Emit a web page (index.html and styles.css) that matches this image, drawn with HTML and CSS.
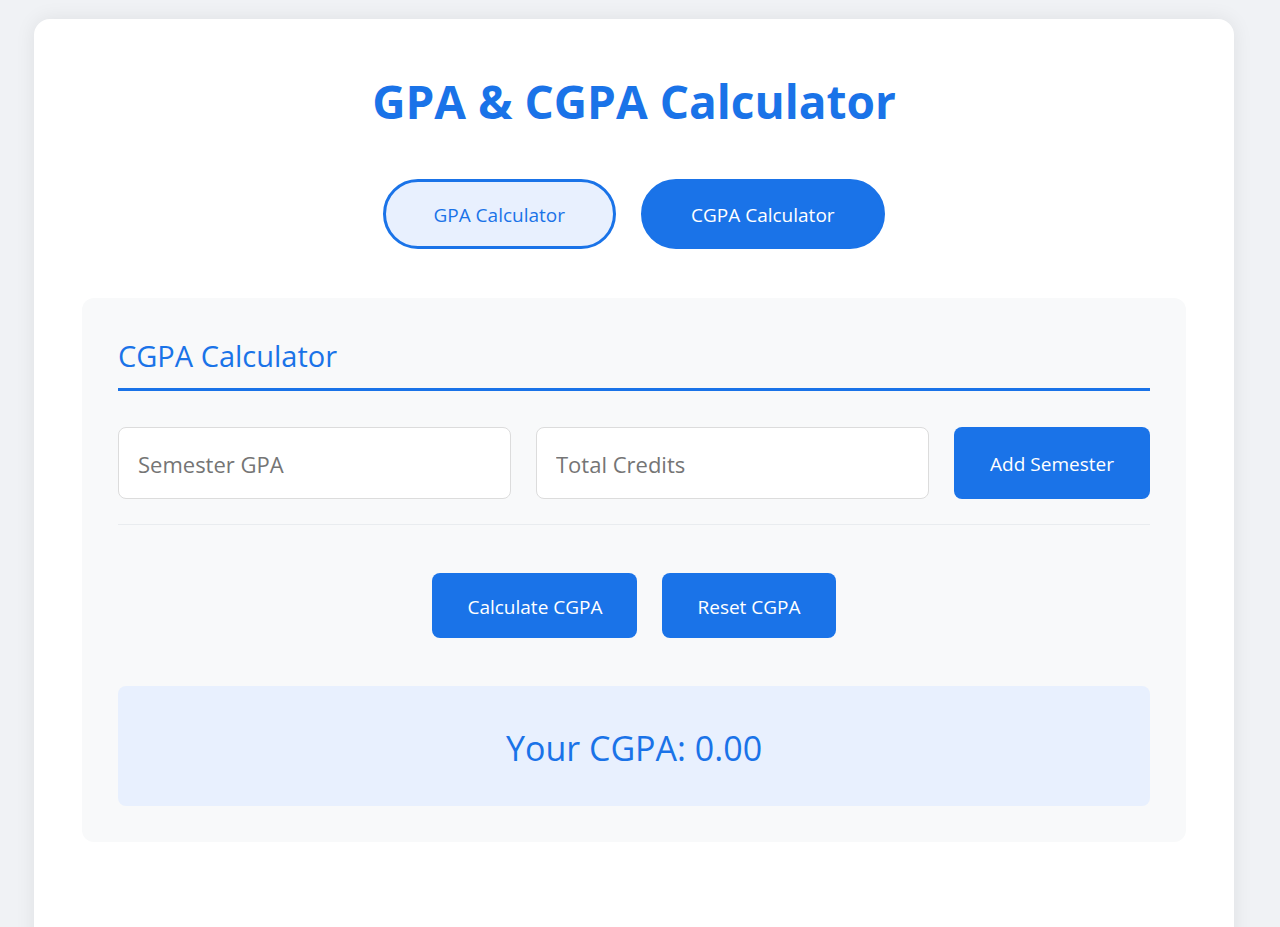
FILE: index.html
```html
<!DOCTYPE html>
<html lang="en">
<head>
<meta charset="utf-8">
<title>GPA &amp; CGPA Calculator</title>
<link rel="stylesheet" href="styles.css">
</head>
<body>
<div class="container">
  <h1 class="title">GPA &amp; CGPA Calculator</h1>
  <div class="tabs">
    <button class="tab tab-outline">GPA Calculator</button>
    <button class="tab tab-filled">CGPA Calculator</button>
  </div>
  <section class="panel">
    <h2 class="panel-title">CGPA Calculator</h2>
    <div class="input-row">
      <input class="field" type="text" placeholder="Semester GPA">
      <input class="field" type="text" placeholder="Total Credits">
      <button class="btn btn-add">Add Semester</button>
    </div>
    <div class="semester-list"></div>
    <div class="actions">
      <button class="btn btn-action">Calculate CGPA</button>
      <button class="btn btn-action">Reset CGPA</button>
    </div>
    <div class="result">Your CGPA: 0.00</div>
  </section>
</div>
</body>
</html>
```
FILE: styles.css
```css
* { box-sizing: border-box; }
html, body { margin: 0; }
body {
  background: #f0f2f5;
  font-family: "Open Sans", "Noto Sans", sans-serif;
  padding-top: 19px;
}
.container {
  width: 1200px;
  margin-left: 34px;
  min-height: 940px;
  background: #fff;
  border-radius: 16px;
  box-shadow: 0 0 20px rgba(0, 0, 0, 0.08);
  padding: 53px 48px 48px;
}
.title {
  margin: 0;
  text-align: center;
  color: #1a73e8;
  font-size: 46px;
  font-weight: 700;
  line-height: 58px;
}
.tabs {
  display: flex;
  justify-content: center;
  gap: 25px;
  margin-top: 49px;
}
.tab {
  height: 70px;
  padding: 2px 47.5px 0;
  border-radius: 35px;
  border: 3px solid #1a73e8;
  font-family: inherit;
  font-size: 19px;
  cursor: pointer;
}
.tab-outline { background: #e8f0fe; color: #1a73e8; }
.tab-filled { background: #1a73e8; color: #fff; }
.panel {
  margin-top: 49px;
  background: #f8f9fa;
  border-radius: 12px;
  padding: 36px;
}
.panel-title {
  margin: 0;
  color: #1a73e8;
  font-size: 29px;
  font-weight: 400;
  line-height: 44px;
  padding-bottom: 10px;
  border-bottom: 3px solid #1a73e8;
}
.input-row {
  display: flex;
  gap: 25px;
  margin-top: 36px;
  height: 72px;
}
.field {
  flex: 1;
  min-width: 0;
  border: 1px solid #dcdcdc;
  border-radius: 8px;
  background: #fff;
  padding: 2px 19px 0;
  font-family: inherit;
  font-size: 22px;
  color: #333;
}
.field::placeholder { color: #757575; }
.btn {
  border: none;
  border-radius: 8px;
  background: #1a73e8;
  color: #fff;
  font-family: inherit;
  font-size: 19px;
  cursor: pointer;
  padding-top: 2px;
}
.btn-add { width: 196px; }
.semester-list {
  margin-top: 25px;
  border-top: 1px solid #e9ecef;
}
.actions {
  display: flex;
  justify-content: center;
  gap: 25px;
  margin-top: 48px;
}
.btn-action {
  height: 65px;
  padding: 2px 35px 0;
}
.result {
  margin-top: 48px;
  height: 120px;
  background: #e8f0fe;
  border-radius: 8px;
  display: flex;
  align-items: center;
  justify-content: center;
  padding-top: 3px;
  color: #1a73e8;
  font-size: 34px;
}
```
